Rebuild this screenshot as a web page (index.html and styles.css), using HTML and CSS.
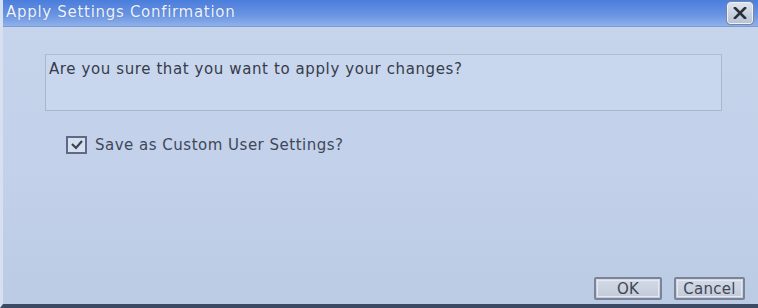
FILE: index.html
```html
<!DOCTYPE html>
<html lang="en">
<head>
<meta charset="UTF-8">
<title>Apply Settings Confirmation</title>
<link rel="stylesheet" href="styles.css">
</head>
<body>
<div class="dialog">
    <div class="titlebar">
        <span class="title">Apply Settings Confirmation</span>
        <button class="close" type="button">
            <svg width="14" height="12" viewBox="0 0 14 12"><path d="M2 1 L12 11 M12 1 L2 11" stroke="#2b2f3a" stroke-width="2.6" stroke-linecap="square"/></svg>
        </button>
    </div>
    <div class="content">
        <div class="message">Are you sure that you want to apply your changes?</div>
        <label class="option">
            <span class="check">
                <svg width="14" height="12" viewBox="0 0 14 12"><path d="M2 5 L6 9 L12 2" fill="none" stroke="#3a4256" stroke-width="2.2"/></svg>
            </span>
            Save as Custom User Settings?
        </label>
    </div>
    <div class="footer">
        <button class="btn ok" type="button">OK</button>
        <button class="btn cancel" type="button">Cancel</button>
    </div>
</div>
</body>
</html>
```
FILE: styles.css
```css
html, body {
    margin: 0;
    padding: 0;
}
body {
    width: 758px;
    height: 308px;
    overflow: hidden;
    font-family: "DejaVu Sans", Verdana, sans-serif;
    background: #c4d3ea;
}
.dialog {
    height: 308px;
    display: flex;
    flex-direction: column;
    box-sizing: border-box;
    border-left: 3px solid #d6e0f0;
    border-bottom: 4px solid #3c4a63;
    background: linear-gradient(to bottom, #c6d4ec, #c2d1e9 60%, #bccbe4);
}
.titlebar {
    height: 26px;
    display: flex;
    align-items: center;
    justify-content: space-between;
    padding: 0 4px 0 3px;
    background: linear-gradient(to bottom, #4a7ddc, #6893e2 55%, #8fb0ea);
    border-bottom: 1px solid #7d9ad0;
}
.title {
    color: #eef3fc;
    font-size: 15px;
    letter-spacing: 0.7px;
    margin-top: -2px;
    text-shadow: 0 0 1px rgba(40, 70, 140, 0.5);
}
.close {
    width: 26px;
    height: 22px;
    margin-right: 1px;
    padding: 0;
    display: flex;
    align-items: center;
    justify-content: center;
    background: linear-gradient(to bottom, #dde3ee, #b9c3d6);
    border: 1.5px solid #eef2f8;
    outline: 1px solid #7687a6;
    border-radius: 3px;
}
.content {
    flex: 1;
    padding: 27px 36px 0 42px;
}
.message {
    height: 57px;
    padding: 5px 3px;
    box-sizing: border-box;
    font-size: 15px;
    letter-spacing: 0.6px;
    color: #363c4a;
    background: #c9d7ee;
    border: 1.5px solid #a9b7cd;
    border-top-color: #b0bdd2;
}
.option {
    display: flex;
    align-items: center;
    gap: 8px;
    margin: 25px 0 0 21px;
    font-size: 15px;
    letter-spacing: 0.5px;
    color: #3f475a;
}
.check {
    width: 21px;
    height: 18px;
    display: flex;
    align-items: center;
    justify-content: center;
    background: #d6dfee;
    border: 2px solid #5c6a84;
    box-sizing: border-box;
}
.footer {
    display: flex;
    justify-content: flex-end;
    gap: 12px;
    padding: 0 13px 4px 0;
}
.btn {
    height: 23px;
    padding: 0;
    font-family: "DejaVu Sans", Verdana, sans-serif;
    font-size: 15px;
    letter-spacing: 0.3px;
    color: #404656;
    background: linear-gradient(to bottom, #d4dbe7, #c2cad9);
    border: 2px solid #7b8496;
    outline: 1px solid #e4e9f2;
    outline-offset: -4px;
    border-radius: 2px;
}
.ok {
    width: 68px;
}
.cancel {
    width: 71px;
}
```
